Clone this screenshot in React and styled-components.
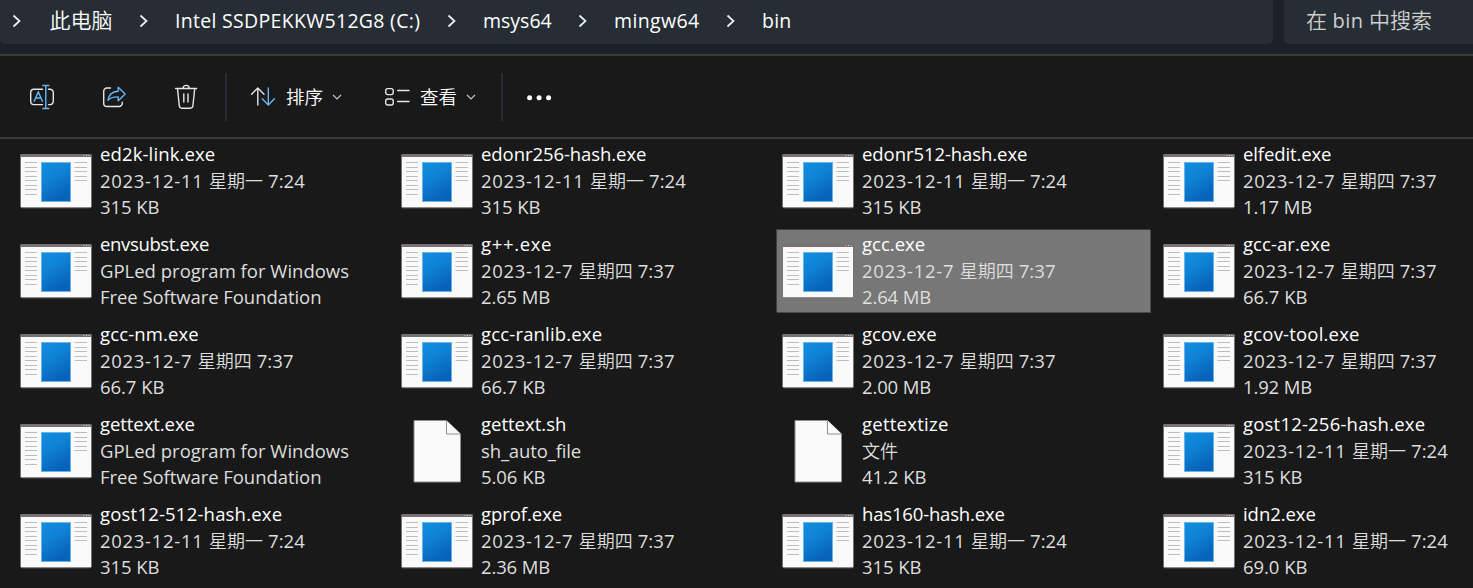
import React from "react";
import styled, { createGlobalStyle } from "styled-components";

const Global = createGlobalStyle`
  * { box-sizing: border-box; }
  html, body { margin: 0; background: #191919; }
  body { overflow: hidden; font-family: "Open Sans", "Noto Sans CJK SC", sans-serif; }
`;

const Window = styled.div`
  width: 1473px;
  height: 588px;
  overflow: hidden;
  background: #191919;
  color: #fff;
`;

const AddressRow = styled.header`
  display: flex;
  gap: 11px;
  height: 56px;
  padding-bottom: 10px;
  background: #1b2129;
  border-bottom: 2px solid #3b3b3b;
`;

const Breadcrumbs = styled.nav`
  display: flex;
  align-items: center;
  width: 1273px;
  height: 44px;
  padding: 0 0 3px 11px;
  background: #272d34;
  border-radius: 0 0 5px 5px;
`;

const Crumb = styled.span`
  width: ${(p) => p.$w}px;
  margin: 0 25px;
  padding-left: ${(p) => p.$indent || 0}px;
  font-size: 19.5px;
  letter-spacing: ${(p) => p.$ls || 0}px;
  line-height: 28px;
  white-space: nowrap;
`;

const Search = styled.div`
  flex: 1;
  height: 44px;
  padding: 7px 0 0 22px;
  background: #272d34;
  border-radius: 0 0 0 5px;
  color: #cfcfcf;
  font-size: 20px;
  line-height: 28px;
  letter-spacing: 0.4px;
  white-space: nowrap;
`;

const Cjk = styled.span`
  font-family: "Noto Sans CJK SC", sans-serif;
  font-size: ${(p) => p.$size}px;
  font-weight: 350;
  line-height: 0;
  letter-spacing: 0;
`;

const Toolbar = styled.div`
  display: flex;
  align-items: center;
  height: 83px;
  padding-left: 28px;
  border-bottom: 2px solid #3b3b3b;
`;

const IconGroup = styled.div`
  display: flex;
  gap: 44px;
  width: 197px;
`;

const IconButton = styled.span`
  display: flex;
  width: 28px;
  height: 28px;
`;

const Divider = styled.span`
  width: 2px;
  height: 48px;
  background: #262b33;
`;

const MenuButton = styled.span`
  display: flex;
  align-items: center;
  margin-left: ${(p) => p.$left}px;
  width: ${(p) => p.$w}px;
`;

const MenuLabel = styled.span`
  width: 38px;
  margin: 0 8px 0 10px;
  padding-top: 2px;
  line-height: 26px;
  white-space: nowrap;
`;

const Files = styled.main`
  display: grid;
  grid-template-columns: repeat(4, 374px);
  grid-auto-rows: 83px;
  gap: 7px;
  padding: 1px 0 0 15px;
`;

const File = styled.div`
  display: flex;
  background: ${(p) => (p.$selected ? "#777" : "transparent")};
  box-shadow: ${(p) => (p.$selected ? "-1px -1px 0 #404040, inset -1px -1px 0 #4c4c4c" : "none")};
`;

const Thumb = styled.div`
  display: flex;
  justify-content: center;
  width: 72px;
  margin: ${(p) => p.$top}px 8px 0 5px;
`;

const Details = styled.div`
  white-space: nowrap;
`;

const Line = styled.div`
  height: ${(p) => (p.$name ? 27 : 26)}px;
  font-size: 18.5px;
  line-height: 27px;
  letter-spacing: ${(p) => p.$ls}px;
  color: ${(p) => (p.$name ? "#fff" : "#dedede")};
`;

const Time = styled.span`
  letter-spacing: 0.1px;
`;

function Mixed({ text, size }) {
  return text
    .split(/([\u4e00-\u9fff]+)/)
    .filter(Boolean)
    .map((part, i) => {
      if (/[\u4e00-\u9fff]/.test(part)) return <Cjk key={i} $size={size}>{part}</Cjk>;
      if (part.includes(":") && part.startsWith(" ")) return <Time key={i}>{part}</Time>;
      return <React.Fragment key={i}>{part}</React.Fragment>;
    });
}

const Chevron = () => (
  <svg width="12" height="16" viewBox="0 0 12 16" fill="none" stroke="#f0f0f0" strokeWidth="1.7">
    <path d="M2.5 2.5 8.5 8l-6 5.5" />
  </svg>
);

const Caret = () => (
  <svg width="10" height="8" viewBox="0 0 10 8" fill="none" stroke="#c4c4c4" strokeWidth="1.2">
    <path d="M1 2 5 6l4-4" />
  </svg>
);

const ExeIcon = ({ id }) => (
  <svg width="72" height="55" viewBox="0 0 72 55">
    <defs>
      <linearGradient id={id} x1="0" y1="0" x2=".45" y2="1">
        <stop offset="0" stopColor="#138fe0" />
        <stop offset=".45" stopColor="#0f82d5" />
        <stop offset="1" stopColor="#0763b9" />
      </linearGradient>
    </defs>
    <rect x=".5" y=".5" width="71" height="53.3" rx="1.5" fill="#fafafa" stroke="#77716f" />
    <path d="M0 3V1.5Q0 0 1.5 0h69Q72 0 72 1.5V3z" fill="#77716f" />
    <path d="M63.5 1.5h1M66 1.5h1M68.5 1.5h1" stroke="#d5d5d5" />
    <path
      d="M5 8.5h12M5 13.5h12M5 17.5h12M5 22.5h12M5 26.5h12M5 31.5h12M5 35.5h12M5 40.5h12M54.5 8.5H67M54.5 13.5H67M54.5 17.5H67M54.5 22.5H67M54.5 26.5H67"
      stroke="#bdbdbd"
    />
    <rect x="21.5" y="8.5" width="29" height="39" fill={`url(#${id})`} stroke="#69b3e8" />
  </svg>
);

const PageIcon = () => (
  <svg width="48" height="64" viewBox="0 0 48 64">
    <path d="M1 .5h32.5L47.5 14v48H1z" fill="#fafafa" stroke="#8d8d8d" />
    <path d="M33.5 .5V14h14" fill="#fafafa" stroke="#8d8d8d" />
  </svg>
);

const stroke = { fill: "none", strokeWidth: 1.4, strokeLinejoin: "round", strokeLinecap: "round" };

const RenameIcon = () => (
  <svg width="28" height="28" viewBox="0 0 28 28" {...stroke}>
    <path d="M14.5 5.5H6A3.3 3.3 0 0 0 2.7 8.8v8.8A3.3 3.3 0 0 0 6 20.9h8.5M20.5 5.5H22a3.3 3.3 0 0 1 3.3 3.3v8.8a3.3 3.3 0 0 1-3.3 3.3h-1.5" stroke="#e6e6e6" transform="translate(0 .7)" />
    <path d="M14.8 2.5h6M14.8 25.5h6M17.8 2.5v23M6.2 18.2 10.3 8.7l4.1 9.5M7.6 15h5.4" stroke="#64b7f6" />
  </svg>
);

const ShareIcon = () => (
  <svg width="28" height="28" viewBox="0 0 28 28" {...stroke}>
    <path d="M10.5 5H7a3.3 3.3 0 0 0-3.3 3.3v11.9A3.3 3.3 0 0 0 7 23.5h12a3.3 3.3 0 0 0 3.3-3.3v-1" stroke="#e6e6e6" />
    <path d="M18.2 4.2l7 6.8-7 6.8v-3.9c-4.7-.2-7.9 1-10.2 3.4.5-5 3.8-8.7 10.2-9.1z" stroke="#64b7f6" />
  </svg>
);

const TrashIcon = () => (
  <svg width="28" height="28" viewBox="0 0 28 28" {...stroke} stroke="#e6e6e6">
    <path d="M3.6 5.5h21M11 5.3a3.1 2.9 0 0 1 6.2 0M5.5 5.7l1.8 17.1a2.6 2.6 0 0 0 2.6 2.4h8.4a2.6 2.6 0 0 0 2.6-2.4l1.8-17.1M11.8 11v8M16 11v8" />
  </svg>
);

const SortIcon = () => (
  <svg width="26" height="22" viewBox="0 0 26 22" {...stroke}>
    <path d="M7.8 19V2M1.6 8.2 7.8 2 14 8.2" stroke="#e6e6e6" />
    <path d="M18.3 2v17M12.2 12.8l6.1 6.2 6.1-6.2" stroke="#64b7f6" />
  </svg>
);

const ViewIcon = () => (
  <svg width="26" height="22" viewBox="0 0 26 22" {...stroke} stroke="#e6e6e6">
    <rect x="1.7" y="2.6" width="7.5" height="6" rx="2" />
    <rect x="1.7" y="13" width="7.5" height="6" rx="2" />
    <path d="M13.7 4.5H25M13.7 15.5H25" />
  </svg>
);

const MoreIcon = () => (
  <svg width="28" height="10" viewBox="0 0 28 10" fill="#fff">
    <circle cx="4.6" cy="5.7" r="2.5" />
    <circle cx="14.1" cy="5.7" r="2.5" />
    <circle cx="23.6" cy="5.7" r="2.5" />
  </svg>
);

const crumbs = [
  { text: "此电脑", w: 65, indent: 1.5 },
  { text: "Intel SSDPEKKW512G8 (C:)", w: 246, ls: 0.3, indent: 0 },
  { text: "msys64", w: 69 },
  { text: "mingw64", w: 86, ls: 0.35 },
  { text: "bin", w: 30, ls: 0.2 },
];

const MON = "2023-12-11 星期一 7:24";
const THU = "2023-12-7 星期四 7:37";
const GPL = "GPLed program for Windows";
const FSF = "Free Software Foundation";

// Letter spacing of the second and third lines, by the text they hold.
const spacing = (text) => {
  if (text.includes("星期")) return 0.7;
  if (text.endsWith("KB")) return -0.05;
  if (text.endsWith("MB")) return -0.15;
  if (text === FSF) return -0.06;
  if (text === "sh_auto_file") return -0.13;
  return 0;
};

const files = [
  ["ed2k-link.exe", MON, "315 KB", 0.13],
  ["edonr256-hash.exe", MON, "315 KB", -0.07],
  ["edonr512-hash.exe", MON, "315 KB", -0.07],
  ["elfedit.exe", THU, "1.17 MB", -0.12],
  ["envsubst.exe", GPL, FSF, -0.35],
  ["g++.exe", THU, "2.65 MB", 0.65],
  ["gcc.exe", THU, "2.64 MB", 0],
  ["gcc-ar.exe", THU, "66.7 KB", 0.06],
  ["gcc-nm.exe", THU, "66.7 KB", 0.13],
  ["gcc-ranlib.exe", THU, "66.7 KB", 0.17],
  ["gcov.exe", THU, "2.00 MB", 0],
  ["gcov-tool.exe", THU, "1.92 MB", 0.2],
  ["gettext.exe", GPL, FSF, -0.07],
  ["gettext.sh", "sh_auto_file", "5.06 KB", 0],
  ["gettextize", "文件", "41.2 KB", 0.25],
  ["gost12-256-hash.exe", MON, "315 KB", 0.2],
  ["gost12-512-hash.exe", MON, "315 KB", 0.2],
  ["gprof.exe", THU, "2.36 MB", -0.05],
  ["has160-hash.exe", MON, "315 KB", -0.17],
  ["idn2.exe", MON, "69.0 KB", -0.05],
];

export default function App() {
  return (
    <Window>
      <Global />
      <AddressRow>
        <Breadcrumbs>
          {crumbs.map((c) => (
            <React.Fragment key={c.text}>
              <Chevron />
              <Crumb $w={c.w} $ls={c.ls} $indent={c.indent}>
                {c.text === "此电脑" ? <Cjk $size={21}>{c.text}</Cjk> : c.text}
              </Crumb>
            </React.Fragment>
          ))}
        </Breadcrumbs>
        <Search><Mixed text="在 bin 中搜索" size={21} /></Search>
      </AddressRow>
      <Toolbar>
        <IconGroup>
          <IconButton><RenameIcon /></IconButton>
          <IconButton><ShareIcon /></IconButton>
          <IconButton><TrashIcon /></IconButton>
        </IconGroup>
        <Divider />
        <MenuButton $left={23} $w={134}>
          <SortIcon />
          <MenuLabel><Cjk $size={18.5}>排序</Cjk></MenuLabel>
          <Caret />
        </MenuButton>
        <MenuButton $left={0} $w={117}>
          <ViewIcon />
          <MenuLabel><Cjk $size={18.5}>查看</Cjk></MenuLabel>
          <Caret />
        </MenuButton>
        <Divider />
        <MenuButton $left={22} $w={28}><MoreIcon /></MenuButton>
      </Toolbar>
      <Files>
        {files.map(([name, info, size, ls], i) => {
          const page = name === "gettext.sh" || name === "gettextize";
          return (
            <File key={name} $selected={name === "gcc.exe"}>
              <Thumb $top={page ? 10 : 14}>{page ? <PageIcon /> : <ExeIcon id={`exe${i}`} />}</Thumb>
              <Details>
                <Line $name $ls={ls}>{name}</Line>
                <Line $ls={spacing(info)}><Mixed text={info} size={18} /></Line>
                <Line $ls={spacing(size)}>{size}</Line>
              </Details>
            </File>
          );
        })}
      </Files>
    </Window>
  );
}
